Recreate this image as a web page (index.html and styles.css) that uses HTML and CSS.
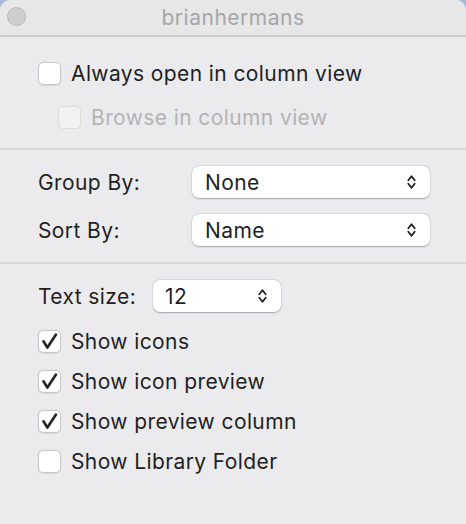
FILE: index.html
```html
<!DOCTYPE html>
<html>
<head>
<meta charset="utf-8">
<link rel="stylesheet" href="styles.css">
</head>
<body>
<div class="window">
  <div class="titlebar">
    <span class="close-dot"></span>
    <span class="title">brianhermans</span>
  </div>
  <div class="section s1">
    <label class="row">
      <span class="box"></span>
      <span class="text">Always open in column view</span>
    </label>
    <label class="row indent disabled">
      <span class="box"></span>
      <span class="text">Browse in column view</span>
    </label>
  </div>
  <div class="divider"></div>
  <div class="section s2">
    <div class="field">
      <span class="label wide">Group By:</span>
      <div class="popup big"><span>None</span>
        <svg class="chev" width="9" height="16" viewBox="0 0 9 16"><path d="M1.3 6.2 L4.5 2.2 L7.7 6.2 M1.3 9.8 L4.5 13.8 L7.7 9.8" fill="none" stroke="#222" stroke-width="1.8" stroke-linecap="round" stroke-linejoin="round"/></svg>
      </div>
    </div>
    <div class="field">
      <span class="label wide">Sort By:</span>
      <div class="popup big"><span>Name</span>
        <svg class="chev" width="9" height="16" viewBox="0 0 9 16"><path d="M1.3 6.2 L4.5 2.2 L7.7 6.2 M1.3 9.8 L4.5 13.8 L7.7 9.8" fill="none" stroke="#222" stroke-width="1.8" stroke-linecap="round" stroke-linejoin="round"/></svg>
      </div>
    </div>
  </div>
  <div class="divider"></div>
  <div class="section s3">
    <div class="field">
      <span class="label">Text size:</span>
      <div class="popup small"><span>12</span>
        <svg class="chev" width="9" height="16" viewBox="0 0 9 16"><path d="M1.3 6.2 L4.5 2.2 L7.7 6.2 M1.3 9.8 L4.5 13.8 L7.7 9.8" fill="none" stroke="#222" stroke-width="1.8" stroke-linecap="round" stroke-linejoin="round"/></svg>
      </div>
    </div>
    <div class="checks">
      <label class="row">
        <span class="box checked"><svg width="21" height="21" viewBox="0 0 21 21"><path d="M4.5 10.3 L8.4 16.6 L17 3.6" fill="none" stroke="#262626" stroke-width="2.7" stroke-linecap="round" stroke-linejoin="round"/></svg></span>
        <span class="text">Show icons</span>
      </label>
      <label class="row">
        <span class="box checked"><svg width="21" height="21" viewBox="0 0 21 21"><path d="M4.5 10.3 L8.4 16.6 L17 3.6" fill="none" stroke="#262626" stroke-width="2.7" stroke-linecap="round" stroke-linejoin="round"/></svg></span>
        <span class="text">Show icon preview</span>
      </label>
      <label class="row">
        <span class="box checked"><svg width="21" height="21" viewBox="0 0 21 21"><path d="M4.5 10.3 L8.4 16.6 L17 3.6" fill="none" stroke="#262626" stroke-width="2.7" stroke-linecap="round" stroke-linejoin="round"/></svg></span>
        <span class="text">Show preview column</span>
      </label>
      <label class="row">
        <span class="box"></span>
        <span class="text">Show Library Folder</span>
      </label>
    </div>
  </div>
</div>
</body>
</html>
```

FILE: styles.css
```css
html, body {
  margin: 0;
  padding: 0;
}
body {
  background: #a9bad2;
  width: 466px;
  height: 524px;
  overflow: hidden;
  font-family: "Inter", "Noto Sans", sans-serif;
  color: #1f1f1f;
}
.window {
  height: 524px;
  background: #ebebed;
  border-radius: 11px 11px 0 0;
  overflow: hidden;
}
.titlebar {
  position: relative;
  height: 35px;
  background: #e7e7e8;
  border-bottom: 2px solid #cdcdcf;
  display: flex;
  align-items: center;
  justify-content: center;
}
.close-dot {
  position: absolute;
  left: 7px;
  top: 7px;
  width: 17px;
  height: 17px;
  border-radius: 50%;
  background: #cfcfd0;
  border: 1px solid #b8b8ba;
}
.title {
  font-size: 21px;
  color: #a6a6a8;
  letter-spacing: 0.5px;
  margin-top: -1px;
}
.section {
  display: flex;
  flex-direction: column;
  padding-left: 38px;
}
.s1 {
  padding-top: 25px;
  padding-bottom: 19px;
  gap: 21px;
}
.s2 {
  padding-top: 16px;
  padding-bottom: 16px;
  gap: 16px;
}
.s3 {
  padding-top: 16px;
  gap: 18px;
}
.checks {
  display: flex;
  flex-direction: column;
  gap: 17px;
}
.divider {
  height: 2px;
  background: #d7d7d9;
}
.row {
  display: flex;
  align-items: center;
  height: 23px;
}
.row.indent {
  padding-left: 20px;
}
.box {
  width: 21px;
  height: 21px;
  border: 1px solid #c6c6c8;
  border-radius: 5px;
  background: #ffffff;
  box-shadow: 0 0.5px 1px rgba(0, 0, 0, 0.08);
  display: flex;
  align-items: center;
  justify-content: center;
  flex: none;
}
.box svg {
  display: block;
}
.text {
  margin-left: 10px;
  font-size: 21px;
  letter-spacing: 0.4px;
}
.disabled .box {
  background: #f2f2f3;
  border-color: #dcdcde;
  box-shadow: none;
}
.disabled .text {
  color: #b3b3b5;
}
.field {
  display: flex;
  align-items: center;
  height: 32px;
}
.label {
  font-size: 21px;
  letter-spacing: 0.4px;
  width: 115px;
  flex: none;
}
.label.wide {
  width: 154px;
}
.popup {
  height: 32px;
  box-sizing: border-box;
  background: #ffffff;
  border-radius: 7px;
  box-shadow: 0 0.5px 1.5px rgba(0, 0, 0, 0.28), 0 0 0 0.5px rgba(0, 0, 0, 0.06);
  display: flex;
  align-items: center;
  justify-content: space-between;
  font-size: 21px;
  letter-spacing: 0.4px;
  padding-right: 14px;
}
.popup.big {
  width: 238px;
  padding-left: 13px;
}
.popup.small {
  width: 128px;
  padding-left: 12px;
}
.chev {
  display: block;
}
```
